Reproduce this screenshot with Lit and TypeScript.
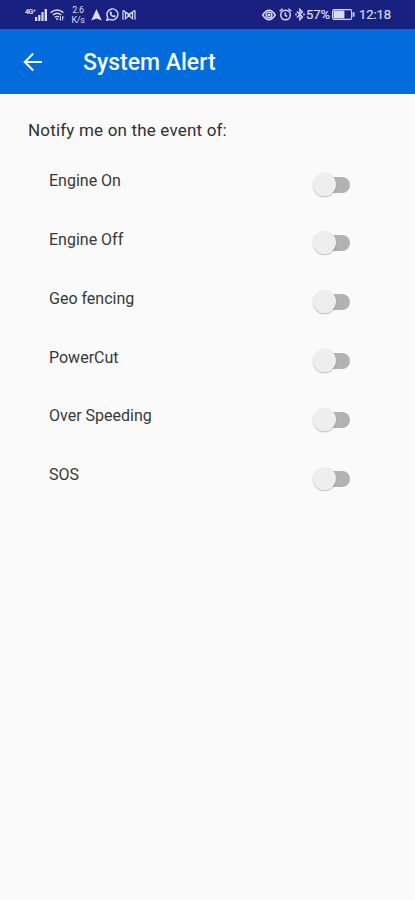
import { LitElement, html, css } from "lit";
import { customElement, property } from "lit/decorators.js";

@customElement("alert-switch")
class AlertSwitch extends LitElement {
  static styles = css`
    :host { display: block; width: 37px; height: 24px; }
    .track { position: relative; width: 37px; height: 24px; }
    .bar { position: absolute; left: 5px; top: 4px; width: 32px; height: 16px; border-radius: 8px; background: #b2b2b2; }
    .thumb { position: absolute; left: 0; top: 0; width: 23px; height: 23px; border-radius: 50%; background: #eeeeee; box-shadow: 0 1px 1.5px rgba(0, 0, 0, 0.24); }
  `;
  render() {
    return html`<div class="track" role="switch" aria-checked="false"><div class="bar"></div><div class="thumb"></div></div>`;
  }
}

@customElement("status-bar")
class StatusBar extends LitElement {
  static styles = css`
    :host { display: flex; height: 29px; box-sizing: border-box; padding: 0 25px 0 25px; justify-content: space-between; align-items: center; background: #18217f; color: #d9dcf3; }
    .group { display: flex; align-items: center; height: 30px; }
    svg { display: block; flex: none; fill: none; stroke: #d9dcf3; stroke-width: 1.4; }
    .fill { fill: #d9dcf3; stroke: none; }
    .net { font-size: 7px; line-height: 6px; font-weight: 700; width: 10px; margin-top: -6px; letter-spacing: -0.4px; white-space: nowrap; }
    .speed { font-size: 9px; line-height: 10px; width: 14px; margin: 1px 6px 0 6px; text-align: center; letter-spacing: -0.3px; }
    .wifi { margin-left: 3px; }
    .app { margin-right: 4px; }
    .text { font-size: 13px; line-height: 16px; margin-top: 1px; white-space: nowrap; -webkit-text-stroke: 0.2px #d9dcf3; }
    .pct { width: 26px; margin-left: 1px; }
    .time { width: 31px; margin-left: 4px; letter-spacing: -0.1px; }
    .gap { margin-right: 3px; }
  `;
  render() {
    return html`
      <div class="group">
        <span class="net">4G⁺</span>
        <svg width="12" height="12" viewBox="0 0 12 12"><path class="fill" d="M0 8h2.2v4H0zM3.2 6h2.2v6H3.2zM6.4 3h2.2v9H6.4zM9.6 0h2.4v12H9.6z"/></svg>
        <svg class="wifi" width="15" height="12" viewBox="0 0 15 12"><path d="M.6 3.6Q7-1.6 13.4 3.6M2.8 6Q7 2.6 11.2 6M4.8 8.2Q7 6.6 9.2 8.2"/><path class="fill" d="M5.6 9.3h2.8L7 11.6z"/><path d="M10.5 7.3v4M9.3 10l1.2 1.3M12.7 11.3v-4l1.2 1.3" stroke-width="1"/></svg>
        <span class="speed">2.6 K/s</span>
        <svg class="app" width="11" height="12" viewBox="0 0 11 12"><path class="fill" d="M5.5 0L10.8 11.6 5.5 9.6.2 11.6z"/></svg>
        <svg class="gap" width="13" height="13" viewBox="0 0 13 13"><path d="M.8 12.2l.9-3A5.5 5.5 0 1 1 3.9 11.3z"/><path class="fill" d="M4.3 3.5l1 0 .7 1.6-.6.8q.7 1.3 1.9 1.8l.8-.8 1.6.9q-.1 1.6-1.7 1.6Q4.2 8.7 3.7 5q0-1 .6-1.5z"/></svg>
        <svg width="14" height="12" viewBox="0 0 14 12"><path d="M1 1.2v9.6M13 1.2v9.6M3.4 3v6M10.6 3v6M1.4 1.4L7 5.6l5.6-4.2M3 10.4L7 6.4l4 4" stroke-width="1.2"/><circle class="fill" cx="7" cy="6" r="1.6"/></svg>
      </div>
      <div class="group">
        <svg class="gap" width="14" height="12" viewBox="0 0 14 12"><path d="M.7 6Q7-3.4 13.3 6 7 15.4 .7 6z"/><circle cx="7" cy="6" r="2.9"/><circle class="fill" cx="7" cy="6" r="1.5"/></svg>
        <svg class="gap" width="13" height="13" viewBox="0 0 13 13"><circle cx="6.5" cy="7" r="4.8"/><path d="M.6 3.2L3.6.7M12.4 3.2L9.4.7M6.3 4.5v3l2 .9"/></svg>
        <svg width="10" height="13" viewBox="0 0 10 13"><path d="M1.8 3.5L7.5 9 4.8 11.8V1.2L7.5 4 1.8 9.5" stroke-width="1.3"/><circle class="fill" cx="1" cy="6.5" r=".9"/><circle class="fill" cx="9" cy="6.5" r=".9"/></svg>
        <span class="text pct">57%</span>
        <svg width="23" height="11" viewBox="0 0 23 11"><rect x=".6" y=".6" width="19" height="9.8" rx="1.5" stroke-width="1.1"/><rect class="fill" x="1.6" y="1.6" width="10.8" height="7.8"/><path class="fill" d="M20.7 3.3h1.8v4.4h-1.8z"/></svg>
        <span class="text time">12:18</span>
      </div>`;
  }
}

@customElement("alert-row")
class AlertRow extends LitElement {
  @property() label = "";
  static styles = css`
    :host { display: flex; justify-content: space-between; align-items: flex-start; height: 58.8px; }
    .label { font-size: 16px; line-height: 20px; color: #383838; white-space: nowrap; }
    alert-switch { margin-top: 1.4px; }
  `;
  render() {
    return html`<span class="label">${this.label}</span><alert-switch></alert-switch>`;
  }
}

@customElement("app-root")
class AppRoot extends LitElement {
  static styles = css`
    :host { display: block; height: 900px; overflow: hidden; background: #fafafa; font-family: Roboto, "Liberation Sans", sans-serif; }
    .bar { display: flex; align-items: center; height: 65px; box-sizing: border-box; padding: 0 0 0 23px; background: #026cdc; color: #f4f9ff; }
    .back { display: block; flex: none; width: 20px; height: 20px; fill: none; stroke: #f4f9ff; stroke-width: 2.1; }
    .title { margin: 2px 0 0 40px; font-size: 23px; line-height: 28px; font-weight: 500; white-space: nowrap; }
    .heading { margin: 0; padding: 26px 28px 0; font-size: 17px; line-height: 20px; font-weight: 400; letter-spacing: 0.18px; color: #303030; white-space: nowrap; }
    .list { padding: 31.2px 65px 0 49px; }
  `;
  private alerts = ["Engine On", "Engine Off", "Geo fencing", "PowerCut", "Over Speeding", "SOS"];
  render() {
    return html`
      <status-bar></status-bar>
      <div class="bar">
        <svg class="back" viewBox="0 0 20 20"><path d="M19 10H2M10.2 1.6L1.8 10l8.4 8.4"/></svg>
        <span class="title">System Alert</span>
      </div>
      <p class="heading">Notify me on the event of:</p>
      <div class="list">${this.alerts.map((a) => html`<alert-row .label=${a}></alert-row>`)}</div>`;
  }
}
